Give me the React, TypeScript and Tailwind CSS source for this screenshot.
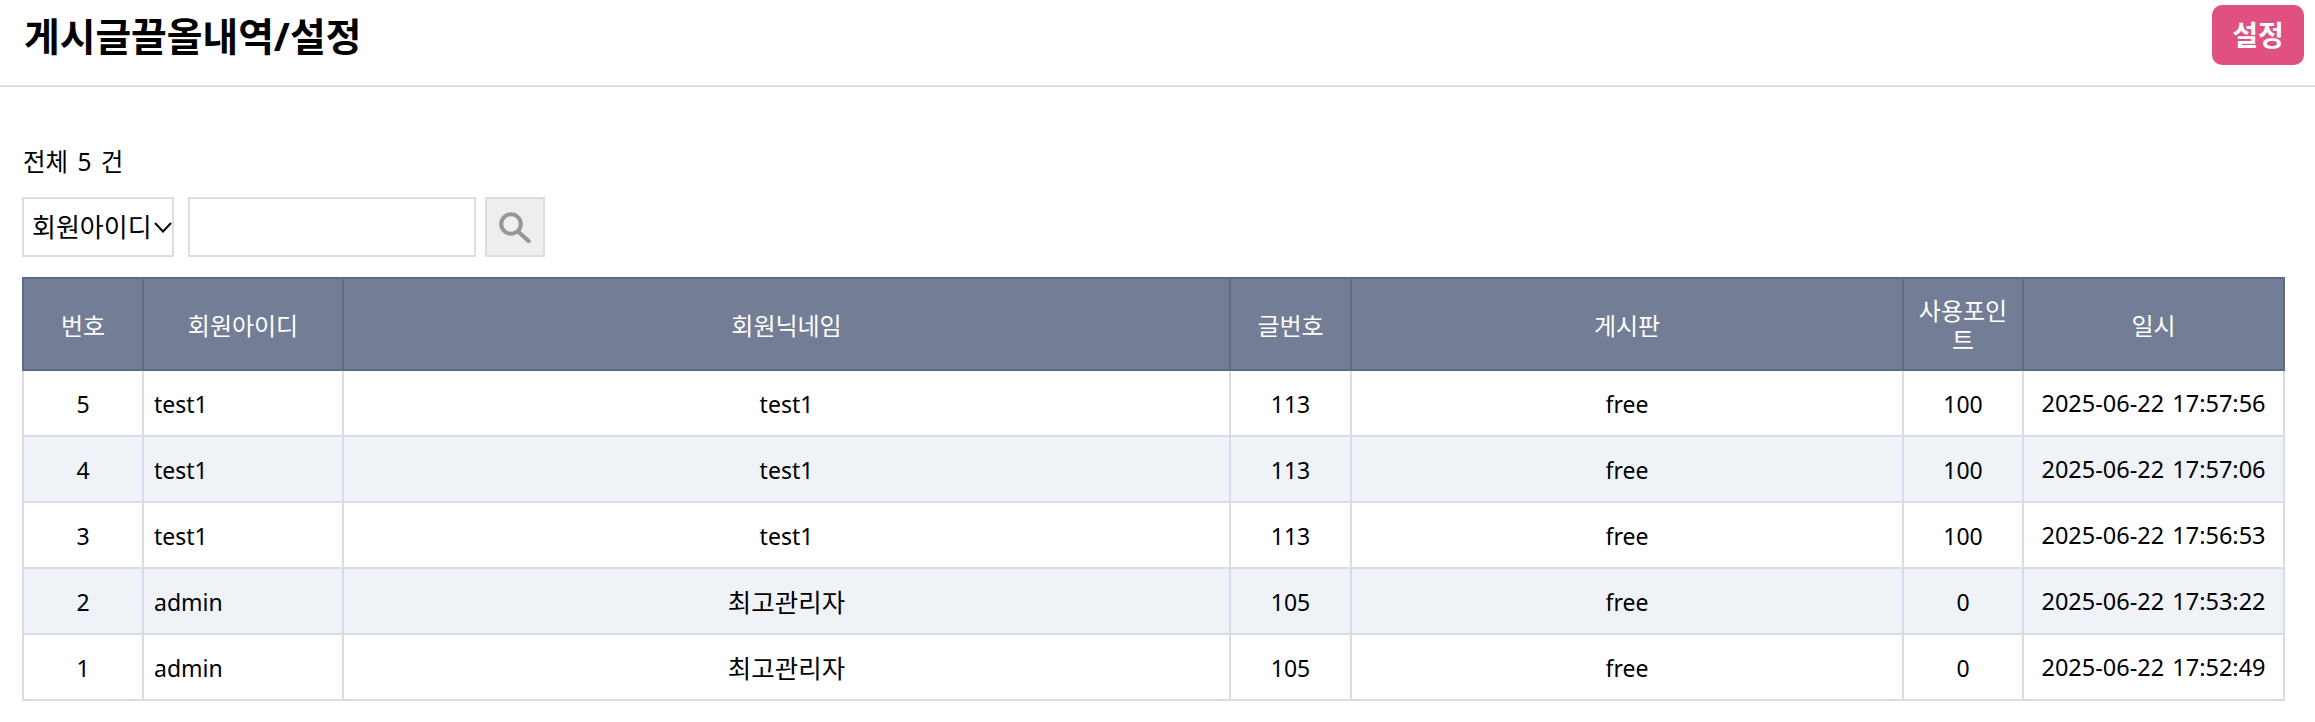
const FONT = "font-['Noto_Sans','Noto_Sans_CJK_KR',sans-serif]";

const rows = [
  { no: 5, id: "test1", nick: "test1", post: 113, board: "free", point: 100, date: "2025-06-22 17:57:56" },
  { no: 4, id: "test1", nick: "test1", post: 113, board: "free", point: 100, date: "2025-06-22 17:57:06" },
  { no: 3, id: "test1", nick: "test1", post: 113, board: "free", point: 100, date: "2025-06-22 17:56:53" },
  { no: 2, id: "admin", nick: "최고관리자", post: 105, board: "free", point: 0, date: "2025-06-22 17:53:22" },
  { no: 1, id: "admin", nick: "최고관리자", post: 105, board: "free", point: 0, date: "2025-06-22 17:52:49" },
];

const TH = "border-2 border-[#5f6a86] px-3 pt-[2px] font-normal text-center text-[24px] leading-[29px]";
const TD = "border-2 border-[#d8dbe8] text-center px-[10px] pt-[2px]";

function SearchIcon() {
  return (
    <svg className="blur-[0.5px]" width="32" height="32" viewBox="0 0 32 32" fill="none">
      <circle cx="12" cy="13" r="9.8" stroke="#979797" strokeWidth="4" />
      <path d="M19 20.5 L29.5 30" stroke="#979797" strokeWidth="4.2" strokeLinecap="round" />
    </svg>
  );
}

export default function App() {
  return (
    <div className={`${FONT} w-[2315px] h-[722px] bg-white text-black overflow-hidden`}>
      {/* page title bar */}
      <header className="flex h-[87px] items-start justify-between border-b-2 border-[#dddddd] pl-[24px] pr-[11px]">
        <h1 className="mt-[9px] text-[38.8px] font-bold leading-[54px]">게시글끌올내역/설정</h1>
        <button className="mt-[5px] h-[60px] w-[92px] rounded-[10px] bg-[#e05080] text-[28px] font-bold text-white">
          설정
        </button>
      </header>

      <div className="px-[22px]">
        <p className="mt-[57px] pl-[1px] text-[24.5px] leading-[36px] [word-spacing:3px]">전체 5 건</p>

        {/* search */}
        <div className="mt-[17px] flex h-[60px]">
          <div className="flex w-[152px] items-center justify-between border-2 border-[#dddddd] pl-[8px] text-[26px]">
            <span>회원아이디</span>
            <svg className="shrink-0" width="18" height="12" viewBox="0 0 18 12" fill="none">
              <path d="M1 2 L9 10.5 L17 2" stroke="#111111" strokeWidth="2.2" />
            </svg>
          </div>
          <input className="ml-[14px] w-[288px] border-2 border-[#dddddd]" />
          <button className="ml-[9px] flex w-[60px] items-center justify-center border-2 border-[#dddddd] bg-[#eeeeee]">
            <SearchIcon />
          </button>
        </div>

        <table className="mt-[20px] w-[2261px] table-fixed border-collapse text-[23px]">
          <colgroup>
            <col className="w-[120px]" />
            <col className="w-[200px]" />
            <col className="w-[887px]" />
            <col className="w-[121px]" />
            <col className="w-[552px]" />
            <col className="w-[120px]" />
            <col className="w-[261px]" />
          </colgroup>
          <thead>
            <tr className="h-[92px] bg-[#747d96] text-white">
              <th className={TH}>번호</th>
              <th className={TH}>회원아이디</th>
              <th className={TH}>회원닉네임</th>
              <th className={TH}>글번호</th>
              <th className={TH}>게시판</th>
              <th className={TH}>사용포인트</th>
              <th className={TH}>일시</th>
            </tr>
          </thead>
          <tbody>
            {rows.map((r) => (
              <tr key={r.no} className="h-[66px] even:bg-[#eff2f7]">
                <td className={TD}>{r.no}</td>
                <td className={`${TD} text-left`}>{r.id}</td>
                <td className={`${TD} ${r.no < 3 ? "text-[25.5px]" : ""}`}>{r.nick}</td>
                <td className={TD}>{r.post}</td>
                <td className={TD}>{r.board}</td>
                <td className={TD}>{r.point}</td>
                <td className={`${TD} whitespace-nowrap px-0 text-[23.5px] [word-spacing:2px]`}>{r.date}</td>
              </tr>
            ))}
          </tbody>
        </table>
      </div>
    </div>
  );
}
